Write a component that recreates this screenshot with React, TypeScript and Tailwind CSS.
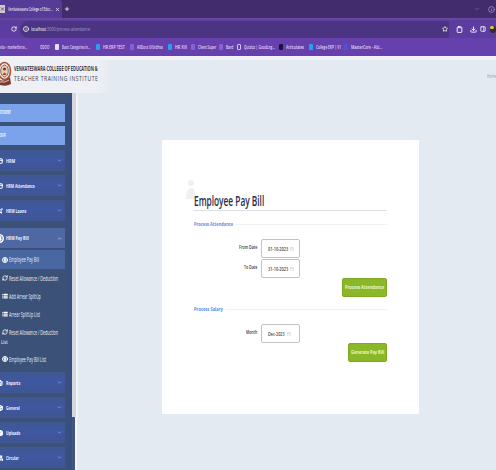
import { useLayoutEffect, useRef, type ReactNode } from "react";
import {
  Calendar, ChevronDown, ChevronUp, CircleDollarSign, Clipboard, Download, Globe, Info, List,
  PanelRight, Plane, Plus, RefreshCw, RotateCw, Star, Table2, Users, X, Box, FileText,
} from "lucide-react";

/* A single line of text squeezed horizontally to a given width. */
function Fit({ w, className = "", children }: { w: number; className?: string; children: ReactNode }) {
  const ref = useRef<HTMLSpanElement>(null);
  useLayoutEffect(() => {
    const el = ref.current;
    if (el) el.style.transform = `scaleX(${w / el.offsetWidth})`;
  }, [w]);
  return (
    <span className={`block shrink-0 whitespace-nowrap ${className}`} style={{ width: w }}>
      <span ref={ref} className="inline-block origin-left align-top">{children}</span>
    </span>
  );
}

const bookmarks = [
  { t: "vbo - marketforce...", w: 27, gap: "", icon: "" },
  { t: "ODOO", w: 9, gap: "ml-[13px]", icon: "" },
  { t: "Basic Categories in...", w: 28, gap: "ml-[6px]", icon: "white" },
  { t: "HR ERP TEST", w: 22, gap: "ml-[6px]", icon: "blue" },
  { t: "AllDocs UiUrdhva", w: 26, gap: "ml-[5px]", icon: "violet" },
  { t: "HR XIII", w: 12, gap: "ml-[5px]", icon: "blue" },
  { t: "Client Super", w: 18, gap: "ml-[4px]", icon: "violet" },
  { t: "Bard", w: 7, gap: "ml-[3px]", icon: "violet" },
  { t: "Quizizz | GoodLng...", w: 31, gap: "ml-[4px]", icon: "outline" },
  { t: "Articulates", w: 18, gap: "ml-[4px]", icon: "black" },
  { t: "College ERP | V1", w: 25, gap: "ml-[5px]", icon: "blue" },
  { t: "MasterCore - Abi...", w: 31, gap: "ml-[3px]", icon: "indigo" },
];

const iconColor: Record<string, string> = {
  white: "bg-[#e9e2ff]",
  blue: "bg-[#27a0ef]",
  violet: "bg-[#8262d6]",
  outline: "border border-[#d5c5fa]",
  black: "bg-[#1c1335]",
  indigo: "bg-[#4b55d4]",
};

function Browser() {
  return (
    <div className="h-14 w-full overflow-hidden font-['Open_Sans',sans-serif] text-white">
      <div className="flex h-[18px] items-center justify-between bg-[#422c6d]">
        <div className="flex h-full items-center">
          <div className="flex h-full w-[62px] items-center rounded-tr-[3px] bg-[#573b98]">
            <div className="flex h-2 w-[5px] items-center justify-center bg-[#d2c8d1]"><X className="size-[6px] text-[#5d4554]" strokeWidth={4} /></div>
            <Fit w={45} className="ml-[3px] text-[5px] leading-[9px]">Venkateswara College of Educ...</Fit>
            <X className="ml-[2px] size-[5px]" strokeWidth={3} />
          </div>
          <Plus className="ml-[2px] size-[6px]" strokeWidth={3} />
        </div>
        <div className="flex items-center gap-2 pr-px"><ChevronDown className="size-[6px] text-[#9d88c9]" /><Info className="size-[7px] text-[#c2b6da]" /></div>
      </div>
      <div className="flex h-[20px] items-center border-t-2 border-[#65479f] bg-[#5c3d9f]">
        <RotateCw className="ml-[11px] size-[6px]" strokeWidth={3} />
        <div className="ml-[3px] flex h-[17px] w-[429px] items-center rounded-l-full bg-[#4b3482]">
          <Info className="ml-[3px] size-[6px]" strokeWidth={3} />
          <Fit w={59} className="ml-[2px] text-[6px] leading-[9px]">localhost<span className="text-[#a99bca]">:3000/process-attendance</span></Fit>
          <Star className="mr-px ml-auto size-[6px]" strokeWidth={3} />
        </div>
        <Clipboard className="ml-[7px] size-[7px]" strokeWidth={3} />
        <Download className="ml-[7px] size-[7px]" strokeWidth={3} />
        <PanelRight className="ml-[3px] size-[6px]" strokeWidth={3} />
        <div className="ml-[4px] h-[7px] w-[6px] rounded-full bg-[#302d31]"><div className="h-[3px] w-1 rounded-full bg-[#e7c53d]" /></div>
      </div>
      <div className="flex h-[18px] items-center bg-[#6640ad] pb-px">
        {bookmarks.map((b) => (
          <div key={b.t} className={`flex items-center ${b.gap}`}>
            {b.icon && <span className={`mr-[3px] h-[6px] w-[4px] rounded-[1px] ${iconColor[b.icon]}`} />}
            <Fit w={b.w} className="text-[5px] leading-[8px] font-semibold text-[#e5d9fb]">{b.t}</Fit>
          </div>
        ))}
      </div>
    </div>
  );
}

function Header() {
  return (
    <header className="flex h-[37px] items-start border-t-4 border-[#f1f0f5] bg-[#e4eaf2]">
      <div className="flex h-[33px] w-[112px] items-center bg-linear-to-r from-[#eef0f6] from-85% to-[#e4eaf2]">
        <svg className="-mt-[4px] h-[28px] w-[12px] shrink-0" viewBox="0 0 12 28">
          <ellipse cx="4.5" cy="10" rx="6" ry="8.5" fill="#f6eee8" stroke="#a8553c" strokeWidth="1.6" />
          <ellipse cx="4.5" cy="10" rx="3.8" ry="6" fill="#edcdb0" stroke="#4d3438" strokeWidth=".7" />
          <circle cx="4.5" cy="8" r="1.5" fill="#69392f" />
          <path d="M2.5 14q2-5 4 0" fill="#a3442c" />
          <path d="M0 19q5 2 10-3l1 7q-5 3-11 1z" fill="#7c3b32" />
          <path d="M0 21q5 1 9-2" stroke="#e9c6aa" fill="none" />
        </svg>
        <div className="-mt-[6px] ml-[2px] font-['Open_Sans',sans-serif] text-[#393947]">
          <Fit w={84} className="text-[7px] leading-[8px] font-bold">VENKATESWARA COLLEGE OF EDUCATION &amp;</Fit>
          <Fit w={84} className="text-[8px] leading-[9px] tracking-[0.8px]">TEACHER TRAINING INSTITUTE</Fit>
        </div>
      </div>
      <Fit w={9} className="mt-[12px] ml-auto text-[5px] leading-[8px] text-[#9499a3]">Home</Fit>
    </header>
  );
}

function Group({ t, w, icon, open = false, gap = "mb-[4px]" }: { t: string; w: number; icon: ReactNode; open?: boolean; gap?: string }) {
  return (
    <div className={`flex w-[65px] shrink-0 items-center ${gap} ${open ? "h-[20px] bg-[#4d68a2]" : "h-[21px] bg-linear-to-b from-[#3f5891] via-[#4057a2] to-[#3e5691]"}`}>
      <div className="flex w-[6px] justify-start text-white">{icon}</div>
      <Fit w={w} className="text-[6px] leading-[10px] font-bold text-[#eef2ff]">{t}</Fit>
      {open ? <ChevronUp className="mr-[3px] ml-auto size-[5px] text-[#b5c8f2]" strokeWidth={4} /> : <ChevronDown className="mr-[3px] ml-auto size-[5px] text-[#829ae2]" strokeWidth={4} />}
    </div>
  );
}

function Sub({ t, w, icon, h, active = false }: { t: string; w: number; icon: ReactNode; h: string; active?: boolean }) {
  return (
    <div className={`flex w-[65px] shrink-0 items-center pl-[2px] text-white ${h} ${active ? "bg-[#4968a2]" : ""}`}>
      {icon}
      <Fit w={w} className="ml-px text-[6.5px] leading-[9px] text-[#e9eef8]">{t}</Fit>
    </div>
  );
}

const gi = "size-[6px] -ml-[3px]";
const si = "size-[6px] shrink-0";

function Sidebar() {
  return (
    <div className="flex h-[377px] shrink-0">
      <aside className="flex w-[72px] flex-col overflow-hidden border-r-[5px] border-[#385081] bg-[#3b5178] pt-[11px] font-['Open_Sans',sans-serif]">
        <div className="mb-[4px] flex h-[18px] w-[65px] shrink-0 items-center bg-[#7ba3ec]"><Fit w={11} className="text-[5px] font-bold text-white">STUDENT</Fit></div>
        <div className="mb-[5px] flex h-[19px] w-[65px] shrink-0 items-center bg-[#7ba3ec]"><Fit w={6} className="text-[5px] font-bold text-white">STAFF</Fit></div>
        <Group t="HRM" w={9} icon={<Table2 className={gi} strokeWidth={4} />} />
        <Group t="HRM Attendance" w={29} icon={<Table2 className={gi} strokeWidth={4} />} />
        <Group t="HRM Loans" w={20} icon={<Plane className={gi} strokeWidth={4} />} gap="mb-[7px]" />
        <Group t="HRM Pay Bill" w={23} icon={<CircleDollarSign className="-ml-[5px] size-[9px]" strokeWidth={4} />} open gap="mb-[2px]" />
        <Sub t="Employee Pay Bill" w={30} h="h-[19px]" active icon={<CircleDollarSign className={si} strokeWidth={4} />} />
        <Sub t="Reset Allowance / Deduction" w={49} h="h-[18px]" icon={<RefreshCw className={si} strokeWidth={3} />} />
        <Sub t="Add Arrear SplitUp" w={32} h="h-[18px]" icon={<List className={si} strokeWidth={5} />} />
        <Sub t="Arrear SplitUp List" w={31} h="h-[18px]" icon={<List className={si} strokeWidth={5} />} />
        <Sub t="Reset Allowance / Deduction" w={49} h="h-[18px]" icon={<RefreshCw className={si} strokeWidth={3} />} />
        <div className="h-[9px] shrink-0 pl-px"><Fit w={7} className="-mt-[3px] text-[6px] leading-[9px] text-white">List</Fit></div>
        <Sub t="Employee Pay Bill List" w={37} h="h-[18px]" icon={<CircleDollarSign className={si} strokeWidth={4} />} />
        <div className="h-[4px] shrink-0" />
        <Group t="Reports" w={14} icon={<FileText className={gi} strokeWidth={4} />} />
        <Group t="General" w={14} icon={<Box className={gi} strokeWidth={5} />} />
        <Group t="Uploads" w={14} icon={<Globe className={gi} strokeWidth={5} />} />
        <Group t="Circular" w={13} icon={<Users className={gi} strokeWidth={5} />} />
      </aside>
      <div className="flex w-[6px] flex-col">
        <div className="h-[324px] border-r-2 border-[#f2f3f6] bg-[#d4d7df]" />
        <div className="w-[5px] flex-1 border-r-2 border-[#f4f7fb] bg-[#405681]" />
      </div>
    </div>
  );
}

function Section({ t, w }: { t: string; w: number }) {
  return (
    <div className="flex h-[8px] items-center gap-[2px]">
      <Fit w={w} className="text-[6px] leading-[8px] font-bold text-[#5c8be9]">{t}</Fit>
      <div className="h-px flex-1 bg-[#f1f1f2]" />
    </div>
  );
}

function Field({ label, lw, value, vw }: { label: string; lw: number; value: string; vw: number }) {
  return (
    <div className="flex h-[20px] items-start">
      <div className="mr-[4px] flex w-[63px] justify-end pt-[4px]"><Fit w={lw} className="text-[6px] leading-[8px] font-semibold text-[#33363b]">{label}</Fit></div>
      <div className="flex h-[19px] w-[39px] items-center rounded-[2px] border border-[#c3c3c7] bg-white pl-[6px]">
        <Fit w={vw} className="text-[6px] leading-[8px] font-semibold text-[#44464b]">{value}</Fit>
        <Calendar className="ml-[2px] size-[4px] text-[#bbb]" />
      </div>
    </div>
  );
}

function Action({ t, w, box }: { t: string; w: number; box: string }) {
  return (
    <button className={`ml-auto flex h-[19px] items-center justify-center rounded-[2px] border border-[#82a926] bg-[#8bb829] ${box}`}>
      <Fit w={w} className="text-left text-[6px] leading-[9px] font-bold text-[#eaf9c3]">{t}</Fit>
    </button>
  );
}

export default function App() {
  return (
    <div className="h-[470px] w-[496px] overflow-hidden bg-[#e4eaf2] font-['Open_Sans',sans-serif]">
      <Browser />
      <Header />
      <div className="flex">
        <Sidebar />
        <main className="mt-[47px] ml-[84px] h-[274px] w-[257px] bg-white pr-[32px] pl-[32px]">
          <div className="-ml-[8px] h-[52px] pt-[39px]">
            <svg className="h-[21px] w-[9px]" viewBox="0 0 9 21" fill="#f0f0f3"><circle cx="5" cy="4" r="3" /><path d="M0 20q0-11 5-11t4 11z" /></svg>
          </div>
          <h1 className="flex h-[19px] items-start border-b border-[#dedfe2]">
            <Fit w={70} className="text-[14px] leading-[18px] font-semibold text-[#292b4c]">Employee Pay Bill</Fit>
          </h1>
          <div className="h-[9px]" />
          <Section t="Process Attendance" w={39} />
          <div className="h-[11px]" />
          <Field label="From Date" lw={18} value="01-10-2023" vw={20} />
          <Field label="To Date" lw={13} value="31-10-2023" vw={20} />
          <div className="h-[19px] -translate-y-px"><Action t="Process Attendance" w={39} box="w-[45px]" /></div>
          <div className="h-[7px]" />
          <Section t="Process Salary" w={29} />
          <div className="h-[11px]" />
          <Field label="Month" lw={11} value="Dec-2023" vw={17} />
          <div className="-mt-px"><Action t="Generate Pay Bill" w={33} box="w-[39px]" /></div>
        </main>
      </div>
    </div>
  );
}
